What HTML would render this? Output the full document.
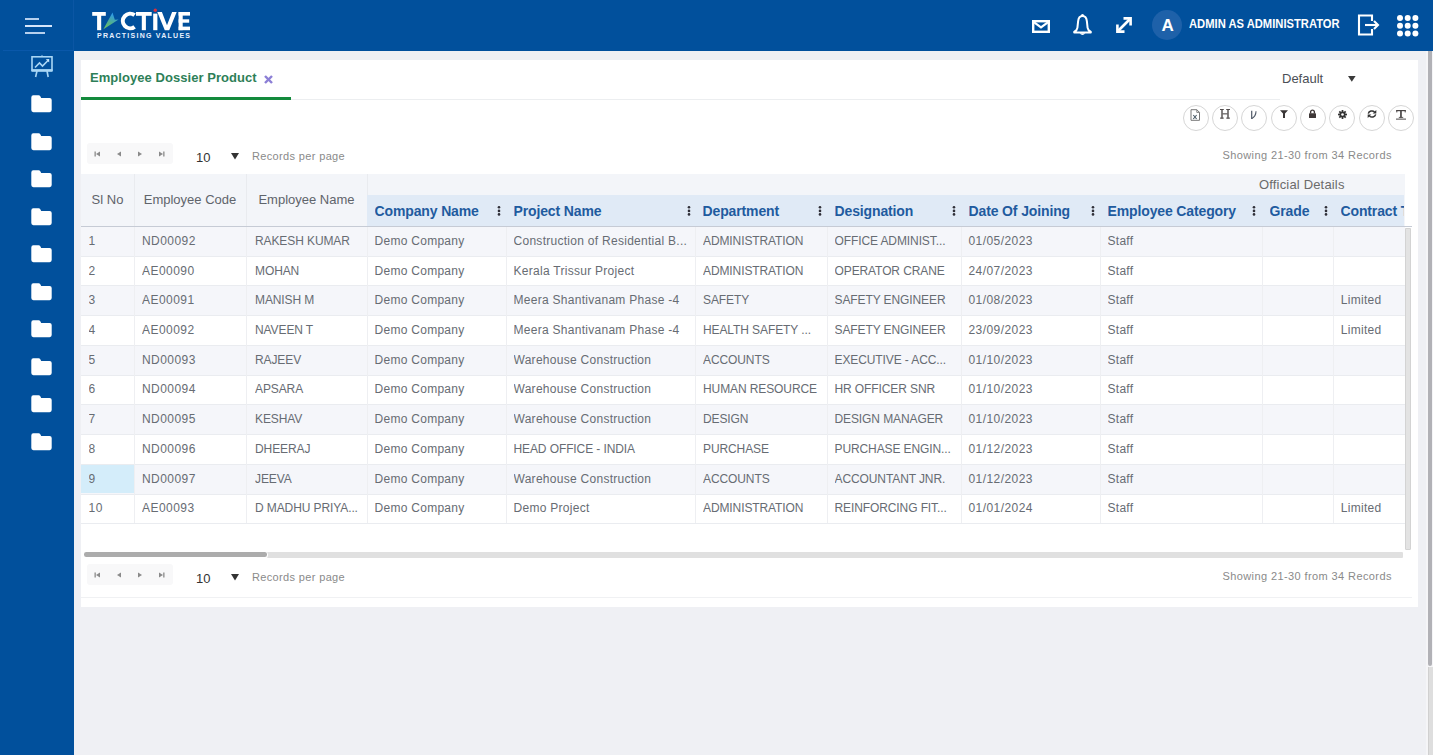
<!DOCTYPE html><html><head><meta charset="utf-8"><style>
*{box-sizing:border-box;margin:0;padding:0}
html,body{width:1433px;height:755px;overflow:hidden}
body{position:relative;background:#eff0f4;font-family:"Liberation Sans",sans-serif;color:#555}
.a{position:absolute}
.t{position:absolute;white-space:nowrap}
.hb{position:absolute;height:2px;background:#d6e6fb;left:25px}
.cell{position:absolute;white-space:nowrap;overflow:hidden;font-size:12px;letter-spacing:0.2px;color:#676c73;line-height:14px}
.hd{position:absolute;white-space:nowrap;overflow:hidden;font-size:14px;font-weight:700;color:#1f5b9f;line-height:16px;letter-spacing:-0.13px}
.keb{position:absolute;width:3px}
.keb i{display:block;width:2.4px;height:2.4px;background:#3a3a3a;border-radius:50%;margin-bottom:0.8px}
.tb{position:absolute;width:26px;height:26px;border:1px solid #d6d6d6;border-radius:50%;background:#fff}
</style></head><body>
<div class="a" style="left:0;top:0;width:74px;height:755px;background:#01509c"></div>
<div class="a" style="left:74px;top:0;width:1359px;height:51px;background:#01509c"></div>
<div class="a" style="left:73px;top:0;width:1px;height:51px;background:#0b56a4"></div>
<div class="a" style="left:3px;top:50px;width:71px;height:1px;background:#0a58aa"></div>
<div class="hb" style="top:18px;width:14px;opacity:.85"></div>
<div class="hb" style="top:25px;width:27px"></div>
<div class="hb" style="top:32px;width:20px;opacity:.85"></div>
<svg class="a" style="left:30px;top:54px" width="24" height="25" viewBox="0 0 24 25">
<g fill="none" stroke="#a9d6f5" stroke-width="1.6">
<rect x="2" y="2.8" width="20" height="13.5"/>
<polyline points="5,13.5 9.5,9 12.5,12 18,6.5"/>
<line x1="7" y1="17" x2="5.6" y2="23"/><line x1="17" y1="17" x2="18.2" y2="23"/>
</g><rect x="1.5" y="15.2" width="21" height="2.6" fill="#a9d6f5"/><polygon points="11,2.5 13,2.5 12,0.8" fill="#a9d6f5"/><polygon points="19.2,5 19.2,8.6 15.8,5.2" fill="#c9e6fb"/></svg>
<svg class="a" style="left:30.5px;top:95.0px" width="21" height="18" viewBox="0 0 21 18"><path d="M2.3 0.3 H7.6 Q8.7 0.3 9.3 1.3 L10.2 2.9 H18.6 Q20.7 2.9 20.7 5 V15.1 Q20.7 17.2 18.6 17.2 H2.4 Q0.3 17.2 0.3 15.1 V2.4 Q0.3 0.3 2.3 0.3Z" fill="#fff"/></svg>
<svg class="a" style="left:30.5px;top:132.5px" width="21" height="18" viewBox="0 0 21 18"><path d="M2.3 0.3 H7.6 Q8.7 0.3 9.3 1.3 L10.2 2.9 H18.6 Q20.7 2.9 20.7 5 V15.1 Q20.7 17.2 18.6 17.2 H2.4 Q0.3 17.2 0.3 15.1 V2.4 Q0.3 0.3 2.3 0.3Z" fill="#fff"/></svg>
<svg class="a" style="left:30.5px;top:170.0px" width="21" height="18" viewBox="0 0 21 18"><path d="M2.3 0.3 H7.6 Q8.7 0.3 9.3 1.3 L10.2 2.9 H18.6 Q20.7 2.9 20.7 5 V15.1 Q20.7 17.2 18.6 17.2 H2.4 Q0.3 17.2 0.3 15.1 V2.4 Q0.3 0.3 2.3 0.3Z" fill="#fff"/></svg>
<svg class="a" style="left:30.5px;top:207.5px" width="21" height="18" viewBox="0 0 21 18"><path d="M2.3 0.3 H7.6 Q8.7 0.3 9.3 1.3 L10.2 2.9 H18.6 Q20.7 2.9 20.7 5 V15.1 Q20.7 17.2 18.6 17.2 H2.4 Q0.3 17.2 0.3 15.1 V2.4 Q0.3 0.3 2.3 0.3Z" fill="#fff"/></svg>
<svg class="a" style="left:30.5px;top:245.0px" width="21" height="18" viewBox="0 0 21 18"><path d="M2.3 0.3 H7.6 Q8.7 0.3 9.3 1.3 L10.2 2.9 H18.6 Q20.7 2.9 20.7 5 V15.1 Q20.7 17.2 18.6 17.2 H2.4 Q0.3 17.2 0.3 15.1 V2.4 Q0.3 0.3 2.3 0.3Z" fill="#fff"/></svg>
<svg class="a" style="left:30.5px;top:282.5px" width="21" height="18" viewBox="0 0 21 18"><path d="M2.3 0.3 H7.6 Q8.7 0.3 9.3 1.3 L10.2 2.9 H18.6 Q20.7 2.9 20.7 5 V15.1 Q20.7 17.2 18.6 17.2 H2.4 Q0.3 17.2 0.3 15.1 V2.4 Q0.3 0.3 2.3 0.3Z" fill="#fff"/></svg>
<svg class="a" style="left:30.5px;top:320.0px" width="21" height="18" viewBox="0 0 21 18"><path d="M2.3 0.3 H7.6 Q8.7 0.3 9.3 1.3 L10.2 2.9 H18.6 Q20.7 2.9 20.7 5 V15.1 Q20.7 17.2 18.6 17.2 H2.4 Q0.3 17.2 0.3 15.1 V2.4 Q0.3 0.3 2.3 0.3Z" fill="#fff"/></svg>
<svg class="a" style="left:30.5px;top:357.5px" width="21" height="18" viewBox="0 0 21 18"><path d="M2.3 0.3 H7.6 Q8.7 0.3 9.3 1.3 L10.2 2.9 H18.6 Q20.7 2.9 20.7 5 V15.1 Q20.7 17.2 18.6 17.2 H2.4 Q0.3 17.2 0.3 15.1 V2.4 Q0.3 0.3 2.3 0.3Z" fill="#fff"/></svg>
<svg class="a" style="left:30.5px;top:395.0px" width="21" height="18" viewBox="0 0 21 18"><path d="M2.3 0.3 H7.6 Q8.7 0.3 9.3 1.3 L10.2 2.9 H18.6 Q20.7 2.9 20.7 5 V15.1 Q20.7 17.2 18.6 17.2 H2.4 Q0.3 17.2 0.3 15.1 V2.4 Q0.3 0.3 2.3 0.3Z" fill="#fff"/></svg>
<svg class="a" style="left:30.5px;top:432.5px" width="21" height="18" viewBox="0 0 21 18"><path d="M2.3 0.3 H7.6 Q8.7 0.3 9.3 1.3 L10.2 2.9 H18.6 Q20.7 2.9 20.7 5 V15.1 Q20.7 17.2 18.6 17.2 H2.4 Q0.3 17.2 0.3 15.1 V2.4 Q0.3 0.3 2.3 0.3Z" fill="#fff"/></svg>
<svg class="a" style="left:0;top:0" width="200" height="40" viewBox="0 0 200 40">
<defs><linearGradient id="lg" x1="0" y1="1" x2="0.3" y2="0"><stop offset="0" stop-color="#74c35a"/><stop offset="0.45" stop-color="#52b08a"/><stop offset="1" stop-color="#2f9be6"/></linearGradient></defs>
<g fill="#fff">
<rect x="92.2" y="12" width="13.6" height="3.8"/><rect x="97.1" y="12" width="4.1" height="18.2"/>
<rect x="136" y="12" width="15.7" height="3.8"/><rect x="141.8" y="12" width="4.1" height="18.2"/>
<rect x="153.2" y="13.6" width="4.2" height="16.6"/>
<polygon points="157.3,12 161.9,12 167,25.2 172.1,12 176.7,12 169.2,30.2 164.8,30.2"/>
<rect x="178.6" y="12" width="4.1" height="18.2"/><rect x="178.6" y="12" width="11.4" height="3.6"/><rect x="178.6" y="19.3" width="10.6" height="3.4"/><rect x="178.6" y="26.6" width="11.4" height="3.6"/>
</g>
<path d="M134.6 15.2 A7.3 7.3 0 1 0 134.6 26.8" fill="none" stroke="#fff" stroke-width="4.1"/>
<polygon points="103.4,29.2 112.5,12.5 114.8,19.8 118.6,19.4" fill="url(#lg)"/>
<circle cx="155.3" cy="10.2" r="1.7" fill="#d8303c"/>
</svg>
<div class="t" style="left:97px;top:31.7px;font-size:7px;font-weight:700;color:#e8f0ff;letter-spacing:1.25px;line-height:8px">PRACTISING VALUES</div>
<svg class="a" style="left:1032px;top:19.5px" width="18" height="13" viewBox="0 0 18 13"><rect x="1.2" y="1.2" width="15.6" height="10.6" fill="none" stroke="#fff" stroke-width="2.4"/><polyline points="1.5,1.8 9,7.3 16.5,1.8" fill="none" stroke="#fff" stroke-width="2.2"/></svg>
<svg class="a" style="left:1072px;top:13px" width="21" height="24" viewBox="0 0 21 24"><path d="M10.5 3 C7.8 3 6.4 5.3 6.1 8.3 L5.4 14.8 C5.2 16.4 3.8 17.9 2.2 18.9 V19.6 H18.8 V18.9 C17.2 17.9 15.8 16.4 15.6 14.8 L14.9 8.3 C14.6 5.3 13.2 3 10.5 3Z" fill="none" stroke="#fff" stroke-width="2" stroke-linejoin="round"/><circle cx="10.5" cy="2.5" r="1.6" fill="#fff"/><path d="M7.6 20.2 Q10.5 23.8 13.4 20.2Z" fill="#fff"/></svg>
<svg class="a" style="left:1116px;top:17.2px" width="16" height="16" viewBox="0 0 16 16"><g stroke="#fff" stroke-width="2.6" fill="none"><line x1="2.5" y1="13.5" x2="13.5" y2="2.5"/><polyline points="7.5,1.4 14.6,1.4 14.6,8.5"/><polyline points="1.4,7.5 1.4,14.6 8.5,14.6"/></g></svg>
<div class="a" style="left:1152px;top:10px;width:30px;height:30px;border-radius:50%;background:#1e61a9"></div>
<div class="t" style="left:1161.5px;top:15.5px;font-size:17px;font-weight:700;color:#fff;line-height:19px">A</div>
<div class="t" style="left:1189px;top:16.3px;font-size:13px;font-weight:700;color:#fff;line-height:15px;transform:scaleX(0.862);transform-origin:0 0">ADMIN AS ADMINISTRATOR</div>
<svg class="a" style="left:1357px;top:14px" width="23" height="22" viewBox="0 0 23 22"><path d="M15 7 V1.5 H2 V20.5 H15 V15" fill="none" stroke="#fff" stroke-width="2.1"/><line x1="8" y1="11" x2="20.5" y2="11" stroke="#fff" stroke-width="2.1"/><polyline points="17,7 21,11 17,15" fill="none" stroke="#fff" stroke-width="2.1"/></svg>
<svg class="a" style="left:1397px;top:14.8px" width="22" height="22" viewBox="0 0 22 22"><circle cx="3.0" cy="3.0" r="3" fill="#fff"/><circle cx="10.7" cy="3.0" r="3" fill="#fff"/><circle cx="18.4" cy="3.0" r="3" fill="#fff"/><circle cx="3.0" cy="10.7" r="3" fill="#fff"/><circle cx="10.7" cy="10.7" r="3" fill="#fff"/><circle cx="18.4" cy="10.7" r="3" fill="#fff"/><circle cx="3.0" cy="18.4" r="3" fill="#fff"/><circle cx="10.7" cy="18.4" r="3" fill="#fff"/><circle cx="18.4" cy="18.4" r="3" fill="#fff"/></svg>
<div class="a" style="left:1426px;top:51px;width:7px;height:704px;background:#f5f5f7"></div>
<div class="a" style="left:1428px;top:667px;width:5px;height:88px;background:#dedede;border-left:1px solid #d0d0d0"></div>
<div class="a" style="left:1428px;top:51px;width:4px;height:615px;background:#b1b1b6;border-radius:0 0 2px 2px"></div>
<div class="a" style="left:81px;top:60px;width:1337px;height:547px;background:#fff"></div>
<div class="t" style="left:90px;top:70px;font-size:13px;font-weight:700;color:#2e7f58;line-height:15px;letter-spacing:0.05px">Employee Dossier Product</div>
<svg class="a" style="left:264px;top:75px" width="9" height="9" viewBox="0 0 9 9"><g stroke="#8c7fd6" stroke-width="2.4"><line x1="1" y1="1" x2="8" y2="8"/><line x1="8" y1="1" x2="1" y2="8"/></g></svg>
<div class="a" style="left:81px;top:99px;width:1199px;height:1px;background:#eceef0"></div>
<div class="a" style="left:81px;top:97px;width:210px;height:3px;background:#138a3c"></div>
<div class="t" style="left:1282px;top:71px;font-size:13px;color:#4b4f56;line-height:15px">Default</div>
<svg class="a" style="left:1348px;top:75.8px" width="8" height="6" viewBox="0 0 8 6"><polygon points="0,0 7.6,0 3.8,5.8" fill="#3a3a3a"/></svg>
<div class="tb" style="left:1182.5px;top:105px"></div>
<div class="tb" style="left:1211.7px;top:105px"></div>
<div class="tb" style="left:1240.9px;top:105px"></div>
<div class="tb" style="left:1270.6px;top:105px"></div>
<div class="tb" style="left:1299.8px;top:105px"></div>
<div class="tb" style="left:1329.1px;top:105px"></div>
<div class="tb" style="left:1358.7px;top:105px"></div>
<div class="tb" style="left:1388.2px;top:105px"></div>
<svg class="a" style="left:1189.5px;top:108.5px" width="11" height="12" viewBox="0 0 11 12"><path d="M1 .7H6.8L9.5 3.4V11.3H1Z" fill="none" stroke="#777" stroke-width="1"/><path d="M6.8 .7V3.4H9.5" fill="none" stroke="#777" stroke-width="0.9"/><path d="M3.3 6 L6.6 10 M6.6 6 L3.3 10" stroke="#4a5a66" stroke-width="1.1"/></svg>
<svg class="a" style="left:1219.5px;top:109px" width="11" height="10" viewBox="0 0 11 10"><g fill="#514c4c"><rect x="0" y="0" width="3.8" height="1"/><rect x="6.2" y="0" width="3.8" height="1"/><rect x="0" y="8.6" width="3.8" height="1"/><rect x="6.2" y="8.6" width="3.8" height="1"/><rect x="1.3" y="0" width="1.4" height="9.6"/><rect x="7.3" y="0" width="1.4" height="9.6"/><rect x="2.5" y="4.3" width="5" height="1.1"/></g></svg>
<svg class="a" style="left:1250px;top:109.5px" width="8" height="10" viewBox="0 0 8 10"><path d="M1.7 0.8 V9" stroke="#4f5866" stroke-width="1.2" fill="none"/><path d="M1.9 8.5 C4.5 7 6 4.5 6 1.2" stroke="#4f5866" stroke-width="1.1" fill="none"/></svg>
<svg class="a" style="left:1279.5px;top:110px" width="8" height="8" viewBox="0 0 8 8"><path d="M0 0.3 H8 L5 3.6 V8 H3 V3.6Z" fill="#3a3636"/></svg>
<svg class="a" style="left:1309.3px;top:109px" width="7" height="9" viewBox="0 0 7 9"><path d="M1.6 4.5 V3 A1.9 1.9 0 0 1 5.4 3 V4.5" fill="none" stroke="#3f3838" stroke-width="1.4"/><rect x="0" y="4.2" width="7" height="4.8" rx="0.6" fill="#3f3838"/></svg>
<svg class="a" style="left:1338px;top:110px" width="9" height="9" viewBox="0 0 9 9"><g stroke="#333" stroke-width="1.7"><line x1="4.5" y1="0" x2="4.5" y2="9"/><line x1="0" y1="4.5" x2="9" y2="4.5"/><line x1="1.3" y1="1.3" x2="7.7" y2="7.7"/><line x1="7.7" y1="1.3" x2="1.3" y2="7.7"/></g><circle cx="4.5" cy="4.5" r="3" fill="#333"/><circle cx="4.5" cy="4.5" r="1.3" fill="#fff"/></svg>
<svg class="a" style="left:1367px;top:110.3px" width="10" height="8" viewBox="0 0 10 8"><path d="M1.3 3.6 A3.7 3.4 0 0 1 7.6 2" fill="none" stroke="#333" stroke-width="1.5"/><polygon points="9.3,0 9.3,3.6 5.7,3.6" fill="#333"/><path d="M8.7 4.4 A3.7 3.4 0 0 1 2.4 6" fill="none" stroke="#333" stroke-width="1.5"/><polygon points="0.7,8 0.7,4.4 4.3,4.4" fill="#333"/></svg>
<svg class="a" style="left:1396px;top:109.5px" width="10" height="10" viewBox="0 0 10 10"><g fill="#4a4646"><rect x="0.3" y="0" width="9.4" height="1.2"/><rect x="0.3" y="0" width="1" height="2.4"/><rect x="8.7" y="0" width="1" height="2.4"/><rect x="4.1" y="0" width="1.7" height="7.6"/><rect x="2.8" y="6.9" width="4.4" height="0.9"/><rect x="0" y="8.6" width="10" height="1"/></g></svg>
<div class="a" style="left:87px;top:143px;width:86px;height:21px;background:#f8f8f9;border-radius:3px"></div>
<svg class="a" style="left:94px;top:150px" width="75" height="8" viewBox="0 0 75 8"><rect x="0.5" y="1.5" width="1.3" height="5" fill="#8a8a8a"/><polygon points="6,1.5 6,6.5 2,4" fill="#8a8a8a"/><polygon points="27,1.5 27,6.5 23,4" fill="#8a8a8a"/><polygon points="44,1.5 44,6.5 48,4" fill="#8a8a8a"/><polygon points="65,1.5 65,6.5 69,4" fill="#8a8a8a"/><rect x="69.2" y="1.5" width="1.3" height="5" fill="#8a8a8a"/></svg>
<div class="t" style="left:196px;top:149.5px;font-size:13px;color:#333;line-height:15px">10</div>
<svg class="a" style="left:231px;top:153px" width="8" height="7" viewBox="0 0 8 7"><polygon points="0,0 8,0 4,6.5" fill="#333"/></svg>
<div class="t" style="left:252px;top:150px;font-size:11px;color:#8a8a8a;letter-spacing:0.35px;line-height:13px">Records per page</div>
<div class="t" style="left:1222.5px;top:148.8px;font-size:11px;color:#8a8a8a;letter-spacing:0.4px;line-height:13px">Showing 21-30 from 34 Records</div>
<div class="a" style="left:81px;top:174px;width:1324px;height:52px;background:#f3f5f9"></div>
<div class="a" style="left:367px;top:195px;width:1037px;height:31px;background:#e0eaf6"></div>
<div class="a" style="left:81px;top:226px;width:1331px;height:1px;background:#c6cbd5"></div>
<div class="a" style="left:134px;top:174px;width:1px;height:52px;background:#e9ebef"></div>
<div class="a" style="left:246px;top:174px;width:1px;height:52px;background:#e9ebef"></div>
<div class="a" style="left:367px;top:174px;width:1px;height:21px;background:#e9ebef"></div>
<div class="t" style="left:1259px;top:177px;font-size:13px;color:#6b6b6b;letter-spacing:0.17px;line-height:15px">Official Details</div>
<div class="t" style="left:81px;width:53px;top:191.8px;text-align:center;font-size:13px;color:#5f646b;line-height:15px">Sl No</div>
<div class="t" style="left:134px;width:112px;top:191.8px;text-align:center;font-size:13px;color:#5f646b;line-height:15px">Employee Code</div>
<div class="t" style="left:246px;width:121px;top:191.8px;text-align:center;font-size:13px;color:#5f646b;line-height:15px">Employee Name</div>
<div class="hd" style="left:374.5px;top:203px;width:131.5px">Company Name</div>
<div class="hd" style="left:513.5px;top:203px;width:181.5px">Project Name</div>
<div class="hd" style="left:702.5px;top:203px;width:124.5px">Department</div>
<div class="hd" style="left:834.5px;top:203px;width:126.5px">Designation</div>
<div class="hd" style="left:968.5px;top:203px;width:131.5px">Date Of Joining</div>
<div class="hd" style="left:1107.5px;top:203px;width:154.5px">Employee Category</div>
<div class="hd" style="left:1269.5px;top:203px;width:63.5px">Grade</div>
<div class="hd" style="left:1340.5px;top:203px;width:63.5px">Contract Type</div>
<svg class="a" style="left:496.6px;top:205px" width="4" height="12" viewBox="0 0 4 12"><g fill="#2f2f38"><circle cx="2" cy="2.3" r="1.3"/><circle cx="2" cy="5.9" r="1.3"/><circle cx="2" cy="9.4" r="1.3"/></g></svg>
<svg class="a" style="left:686.7px;top:205px" width="4" height="12" viewBox="0 0 4 12"><g fill="#2f2f38"><circle cx="2" cy="2.3" r="1.3"/><circle cx="2" cy="5.9" r="1.3"/><circle cx="2" cy="9.4" r="1.3"/></g></svg>
<svg class="a" style="left:818.0px;top:205px" width="4" height="12" viewBox="0 0 4 12"><g fill="#2f2f38"><circle cx="2" cy="2.3" r="1.3"/><circle cx="2" cy="5.9" r="1.3"/><circle cx="2" cy="9.4" r="1.3"/></g></svg>
<svg class="a" style="left:952.0px;top:205px" width="4" height="12" viewBox="0 0 4 12"><g fill="#2f2f38"><circle cx="2" cy="2.3" r="1.3"/><circle cx="2" cy="5.9" r="1.3"/><circle cx="2" cy="9.4" r="1.3"/></g></svg>
<svg class="a" style="left:1090.8px;top:205px" width="4" height="12" viewBox="0 0 4 12"><g fill="#2f2f38"><circle cx="2" cy="2.3" r="1.3"/><circle cx="2" cy="5.9" r="1.3"/><circle cx="2" cy="9.4" r="1.3"/></g></svg>
<svg class="a" style="left:1252.4px;top:205px" width="4" height="12" viewBox="0 0 4 12"><g fill="#2f2f38"><circle cx="2" cy="2.3" r="1.3"/><circle cx="2" cy="5.9" r="1.3"/><circle cx="2" cy="9.4" r="1.3"/></g></svg>
<svg class="a" style="left:1323.8px;top:205px" width="4" height="12" viewBox="0 0 4 12"><g fill="#2f2f38"><circle cx="2" cy="2.3" r="1.3"/><circle cx="2" cy="5.9" r="1.3"/><circle cx="2" cy="9.4" r="1.3"/></g></svg>
<div class="a" style="left:81px;top:227.00px;width:1324px;height:29.73px;background:#f5f6fa;border-bottom:1px solid #eaecf0"></div>
<div class="cell" style="left:88.6px;top:233.80px;width:45.4px;letter-spacing:0.45px">1</div>
<div class="cell" style="left:142.0px;top:233.80px;width:104.0px;letter-spacing:0.45px">ND00092</div>
<div class="cell" style="left:255.0px;top:233.80px;width:112.0px;letter-spacing:-0.1px">RAKESH KUMAR</div>
<div class="cell" style="left:374.5px;top:233.80px;width:131.5px;letter-spacing:0.28px">Demo Company</div>
<div class="cell" style="left:513.5px;top:233.80px;width:181.5px;letter-spacing:0.28px">Construction of Residential B...</div>
<div class="cell" style="left:703.0px;top:233.80px;width:124.0px;letter-spacing:-0.1px">ADMINISTRATION</div>
<div class="cell" style="left:834.5px;top:233.80px;width:126.5px;letter-spacing:-0.1px">OFFICE ADMINIST...</div>
<div class="cell" style="left:968.4px;top:233.80px;width:131.6px;letter-spacing:0.45px">01/05/2023</div>
<div class="cell" style="left:1107.5px;top:233.80px;width:154.5px;letter-spacing:0.28px">Staff</div>
<div class="a" style="left:81px;top:256.73px;width:1324px;height:29.73px;background:#ffffff;border-bottom:1px solid #eaecf0"></div>
<div class="cell" style="left:88.6px;top:263.53px;width:45.4px;letter-spacing:0.45px">2</div>
<div class="cell" style="left:142.0px;top:263.53px;width:104.0px;letter-spacing:0.45px">AE00090</div>
<div class="cell" style="left:255.0px;top:263.53px;width:112.0px;letter-spacing:-0.1px">MOHAN</div>
<div class="cell" style="left:374.5px;top:263.53px;width:131.5px;letter-spacing:0.28px">Demo Company</div>
<div class="cell" style="left:513.5px;top:263.53px;width:181.5px;letter-spacing:0.28px">Kerala Trissur Project</div>
<div class="cell" style="left:703.0px;top:263.53px;width:124.0px;letter-spacing:-0.1px">ADMINISTRATION</div>
<div class="cell" style="left:834.5px;top:263.53px;width:126.5px;letter-spacing:-0.1px">OPERATOR CRANE</div>
<div class="cell" style="left:968.4px;top:263.53px;width:131.6px;letter-spacing:0.45px">24/07/2023</div>
<div class="cell" style="left:1107.5px;top:263.53px;width:154.5px;letter-spacing:0.28px">Staff</div>
<div class="a" style="left:81px;top:286.46px;width:1324px;height:29.73px;background:#f5f6fa;border-bottom:1px solid #eaecf0"></div>
<div class="cell" style="left:88.6px;top:293.26px;width:45.4px;letter-spacing:0.45px">3</div>
<div class="cell" style="left:142.0px;top:293.26px;width:104.0px;letter-spacing:0.45px">AE00091</div>
<div class="cell" style="left:255.0px;top:293.26px;width:112.0px;letter-spacing:-0.1px">MANISH M</div>
<div class="cell" style="left:374.5px;top:293.26px;width:131.5px;letter-spacing:0.28px">Demo Company</div>
<div class="cell" style="left:513.5px;top:293.26px;width:181.5px;letter-spacing:0.28px">Meera Shantivanam Phase -4</div>
<div class="cell" style="left:703.0px;top:293.26px;width:124.0px;letter-spacing:-0.1px">SAFETY</div>
<div class="cell" style="left:834.5px;top:293.26px;width:126.5px;letter-spacing:-0.1px">SAFETY ENGINEER</div>
<div class="cell" style="left:968.4px;top:293.26px;width:131.6px;letter-spacing:0.45px">01/08/2023</div>
<div class="cell" style="left:1107.5px;top:293.26px;width:154.5px;letter-spacing:0.28px">Staff</div>
<div class="cell" style="left:1340.8px;top:293.26px;width:64.2px;letter-spacing:0.28px">Limited</div>
<div class="a" style="left:81px;top:316.19px;width:1324px;height:29.73px;background:#ffffff;border-bottom:1px solid #eaecf0"></div>
<div class="cell" style="left:88.6px;top:322.99px;width:45.4px;letter-spacing:0.45px">4</div>
<div class="cell" style="left:142.0px;top:322.99px;width:104.0px;letter-spacing:0.45px">AE00092</div>
<div class="cell" style="left:255.0px;top:322.99px;width:112.0px;letter-spacing:-0.1px">NAVEEN T</div>
<div class="cell" style="left:374.5px;top:322.99px;width:131.5px;letter-spacing:0.28px">Demo Company</div>
<div class="cell" style="left:513.5px;top:322.99px;width:181.5px;letter-spacing:0.28px">Meera Shantivanam Phase -4</div>
<div class="cell" style="left:703.0px;top:322.99px;width:124.0px;letter-spacing:-0.1px">HEALTH SAFETY ...</div>
<div class="cell" style="left:834.5px;top:322.99px;width:126.5px;letter-spacing:-0.1px">SAFETY ENGINEER</div>
<div class="cell" style="left:968.4px;top:322.99px;width:131.6px;letter-spacing:0.45px">23/09/2023</div>
<div class="cell" style="left:1107.5px;top:322.99px;width:154.5px;letter-spacing:0.28px">Staff</div>
<div class="cell" style="left:1340.8px;top:322.99px;width:64.2px;letter-spacing:0.28px">Limited</div>
<div class="a" style="left:81px;top:345.92px;width:1324px;height:29.73px;background:#f5f6fa;border-bottom:1px solid #eaecf0"></div>
<div class="cell" style="left:88.6px;top:352.72px;width:45.4px;letter-spacing:0.45px">5</div>
<div class="cell" style="left:142.0px;top:352.72px;width:104.0px;letter-spacing:0.45px">ND00093</div>
<div class="cell" style="left:255.0px;top:352.72px;width:112.0px;letter-spacing:-0.1px">RAJEEV</div>
<div class="cell" style="left:374.5px;top:352.72px;width:131.5px;letter-spacing:0.28px">Demo Company</div>
<div class="cell" style="left:513.5px;top:352.72px;width:181.5px;letter-spacing:0.28px">Warehouse Construction</div>
<div class="cell" style="left:703.0px;top:352.72px;width:124.0px;letter-spacing:-0.1px">ACCOUNTS</div>
<div class="cell" style="left:834.5px;top:352.72px;width:126.5px;letter-spacing:-0.1px">EXECUTIVE - ACC...</div>
<div class="cell" style="left:968.4px;top:352.72px;width:131.6px;letter-spacing:0.45px">01/10/2023</div>
<div class="cell" style="left:1107.5px;top:352.72px;width:154.5px;letter-spacing:0.28px">Staff</div>
<div class="a" style="left:81px;top:375.65px;width:1324px;height:29.73px;background:#ffffff;border-bottom:1px solid #eaecf0"></div>
<div class="cell" style="left:88.6px;top:382.45px;width:45.4px;letter-spacing:0.45px">6</div>
<div class="cell" style="left:142.0px;top:382.45px;width:104.0px;letter-spacing:0.45px">ND00094</div>
<div class="cell" style="left:255.0px;top:382.45px;width:112.0px;letter-spacing:-0.1px">APSARA</div>
<div class="cell" style="left:374.5px;top:382.45px;width:131.5px;letter-spacing:0.28px">Demo Company</div>
<div class="cell" style="left:513.5px;top:382.45px;width:181.5px;letter-spacing:0.28px">Warehouse Construction</div>
<div class="cell" style="left:703.0px;top:382.45px;width:124.0px;letter-spacing:-0.1px">HUMAN RESOURCE</div>
<div class="cell" style="left:834.5px;top:382.45px;width:126.5px;letter-spacing:-0.1px">HR OFFICER SNR</div>
<div class="cell" style="left:968.4px;top:382.45px;width:131.6px;letter-spacing:0.45px">01/10/2023</div>
<div class="cell" style="left:1107.5px;top:382.45px;width:154.5px;letter-spacing:0.28px">Staff</div>
<div class="a" style="left:81px;top:405.38px;width:1324px;height:29.73px;background:#f5f6fa;border-bottom:1px solid #eaecf0"></div>
<div class="cell" style="left:88.6px;top:412.18px;width:45.4px;letter-spacing:0.45px">7</div>
<div class="cell" style="left:142.0px;top:412.18px;width:104.0px;letter-spacing:0.45px">ND00095</div>
<div class="cell" style="left:255.0px;top:412.18px;width:112.0px;letter-spacing:-0.1px">KESHAV</div>
<div class="cell" style="left:374.5px;top:412.18px;width:131.5px;letter-spacing:0.28px">Demo Company</div>
<div class="cell" style="left:513.5px;top:412.18px;width:181.5px;letter-spacing:0.28px">Warehouse Construction</div>
<div class="cell" style="left:703.0px;top:412.18px;width:124.0px;letter-spacing:-0.1px">DESIGN</div>
<div class="cell" style="left:834.5px;top:412.18px;width:126.5px;letter-spacing:-0.1px">DESIGN MANAGER</div>
<div class="cell" style="left:968.4px;top:412.18px;width:131.6px;letter-spacing:0.45px">01/10/2023</div>
<div class="cell" style="left:1107.5px;top:412.18px;width:154.5px;letter-spacing:0.28px">Staff</div>
<div class="a" style="left:81px;top:435.11px;width:1324px;height:29.73px;background:#ffffff;border-bottom:1px solid #eaecf0"></div>
<div class="cell" style="left:88.6px;top:441.91px;width:45.4px;letter-spacing:0.45px">8</div>
<div class="cell" style="left:142.0px;top:441.91px;width:104.0px;letter-spacing:0.45px">ND00096</div>
<div class="cell" style="left:255.0px;top:441.91px;width:112.0px;letter-spacing:-0.1px">DHEERAJ</div>
<div class="cell" style="left:374.5px;top:441.91px;width:131.5px;letter-spacing:0.28px">Demo Company</div>
<div class="cell" style="left:513.5px;top:441.91px;width:181.5px;letter-spacing:-0.1px">HEAD OFFICE - INDIA</div>
<div class="cell" style="left:703.0px;top:441.91px;width:124.0px;letter-spacing:-0.1px">PURCHASE</div>
<div class="cell" style="left:834.5px;top:441.91px;width:126.5px;letter-spacing:-0.1px">PURCHASE ENGIN...</div>
<div class="cell" style="left:968.4px;top:441.91px;width:131.6px;letter-spacing:0.45px">01/12/2023</div>
<div class="cell" style="left:1107.5px;top:441.91px;width:154.5px;letter-spacing:0.28px">Staff</div>
<div class="a" style="left:81px;top:464.84px;width:1324px;height:29.73px;background:#f5f6fa;border-bottom:1px solid #eaecf0"></div>
<div class="a" style="left:81px;top:464.84px;width:53px;height:28.13px;background:#d4edfa"></div>
<div class="cell" style="left:88.6px;top:471.64px;width:45.4px;letter-spacing:0.45px">9</div>
<div class="cell" style="left:142.0px;top:471.64px;width:104.0px;letter-spacing:0.45px">ND00097</div>
<div class="cell" style="left:255.0px;top:471.64px;width:112.0px;letter-spacing:-0.1px">JEEVA</div>
<div class="cell" style="left:374.5px;top:471.64px;width:131.5px;letter-spacing:0.28px">Demo Company</div>
<div class="cell" style="left:513.5px;top:471.64px;width:181.5px;letter-spacing:0.28px">Warehouse Construction</div>
<div class="cell" style="left:703.0px;top:471.64px;width:124.0px;letter-spacing:-0.1px">ACCOUNTS</div>
<div class="cell" style="left:834.5px;top:471.64px;width:126.5px;letter-spacing:-0.1px">ACCOUNTANT JNR.</div>
<div class="cell" style="left:968.4px;top:471.64px;width:131.6px;letter-spacing:0.45px">01/12/2023</div>
<div class="cell" style="left:1107.5px;top:471.64px;width:154.5px;letter-spacing:0.28px">Staff</div>
<div class="a" style="left:81px;top:494.57px;width:1324px;height:29.73px;background:#ffffff;border-bottom:1px solid #eaecf0"></div>
<div class="cell" style="left:88.6px;top:501.37px;width:45.4px;letter-spacing:0.45px">10</div>
<div class="cell" style="left:142.0px;top:501.37px;width:104.0px;letter-spacing:0.45px">AE00093</div>
<div class="cell" style="left:255.0px;top:501.37px;width:112.0px;letter-spacing:-0.1px">D MADHU PRIYA...</div>
<div class="cell" style="left:374.5px;top:501.37px;width:131.5px;letter-spacing:0.28px">Demo Company</div>
<div class="cell" style="left:513.5px;top:501.37px;width:181.5px;letter-spacing:0.28px">Demo Project</div>
<div class="cell" style="left:703.0px;top:501.37px;width:124.0px;letter-spacing:-0.1px">ADMINISTRATION</div>
<div class="cell" style="left:834.5px;top:501.37px;width:126.5px;letter-spacing:-0.1px">REINFORCING FIT...</div>
<div class="cell" style="left:968.4px;top:501.37px;width:131.6px;letter-spacing:0.45px">01/01/2024</div>
<div class="cell" style="left:1107.5px;top:501.37px;width:154.5px;letter-spacing:0.28px">Staff</div>
<div class="cell" style="left:1340.8px;top:501.37px;width:64.2px;letter-spacing:0.28px">Limited</div>
<div class="a" style="left:134px;top:227px;width:1px;height:296.3px;background:#eeeff2"></div>
<div class="a" style="left:246px;top:227px;width:1px;height:296.3px;background:#eeeff2"></div>
<div class="a" style="left:367px;top:227px;width:1px;height:296.3px;background:#eeeff2"></div>
<div class="a" style="left:506px;top:227px;width:1px;height:296.3px;background:#eeeff2"></div>
<div class="a" style="left:695px;top:227px;width:1px;height:296.3px;background:#eeeff2"></div>
<div class="a" style="left:827px;top:227px;width:1px;height:296.3px;background:#eeeff2"></div>
<div class="a" style="left:961px;top:227px;width:1px;height:296.3px;background:#eeeff2"></div>
<div class="a" style="left:1100px;top:227px;width:1px;height:296.3px;background:#eeeff2"></div>
<div class="a" style="left:1262px;top:227px;width:1px;height:296.3px;background:#eeeff2"></div>
<div class="a" style="left:1333px;top:227px;width:1px;height:296.3px;background:#eeeff2"></div>
<div class="a" style="left:1405px;top:228px;width:6px;height:322px;background:#e3e3e3;border:1px solid #d3d3d3;border-radius:0 0 1px 1px"></div>
<div class="a" style="left:267px;top:552px;width:1136px;height:6px;background:#e0e0e0;border-radius:1px"></div>
<div class="a" style="left:82.5px;top:551.5px;width:185px;height:6px;background:#fff;border-radius:3px"></div>
<div class="a" style="left:83.5px;top:552.3px;width:183px;height:4.4px;background:#acacac;border-radius:2.2px"></div>
<div class="a" style="left:87px;top:564px;width:86px;height:21px;background:#f8f8f9;border-radius:3px"></div>
<svg class="a" style="left:94px;top:571px" width="75" height="8" viewBox="0 0 75 8"><rect x="0.5" y="1.5" width="1.3" height="5" fill="#8a8a8a"/><polygon points="6,1.5 6,6.5 2,4" fill="#8a8a8a"/><polygon points="27,1.5 27,6.5 23,4" fill="#8a8a8a"/><polygon points="44,1.5 44,6.5 48,4" fill="#8a8a8a"/><polygon points="65,1.5 65,6.5 69,4" fill="#8a8a8a"/><rect x="69.2" y="1.5" width="1.3" height="5" fill="#8a8a8a"/></svg>
<div class="t" style="left:196px;top:570.5px;font-size:13px;color:#333;line-height:15px">10</div>
<svg class="a" style="left:231px;top:574px" width="8" height="7" viewBox="0 0 8 7"><polygon points="0,0 8,0 4,6.5" fill="#333"/></svg>
<div class="t" style="left:252px;top:571px;font-size:11px;color:#8a8a8a;letter-spacing:0.35px;line-height:13px">Records per page</div>
<div class="t" style="left:1222.5px;top:570px;font-size:11px;color:#8a8a8a;letter-spacing:0.4px;line-height:13px">Showing 21-30 from 34 Records</div>
<div class="a" style="left:81px;top:597px;width:1331px;height:1px;background:#f0f1f3"></div>
</body></html>
